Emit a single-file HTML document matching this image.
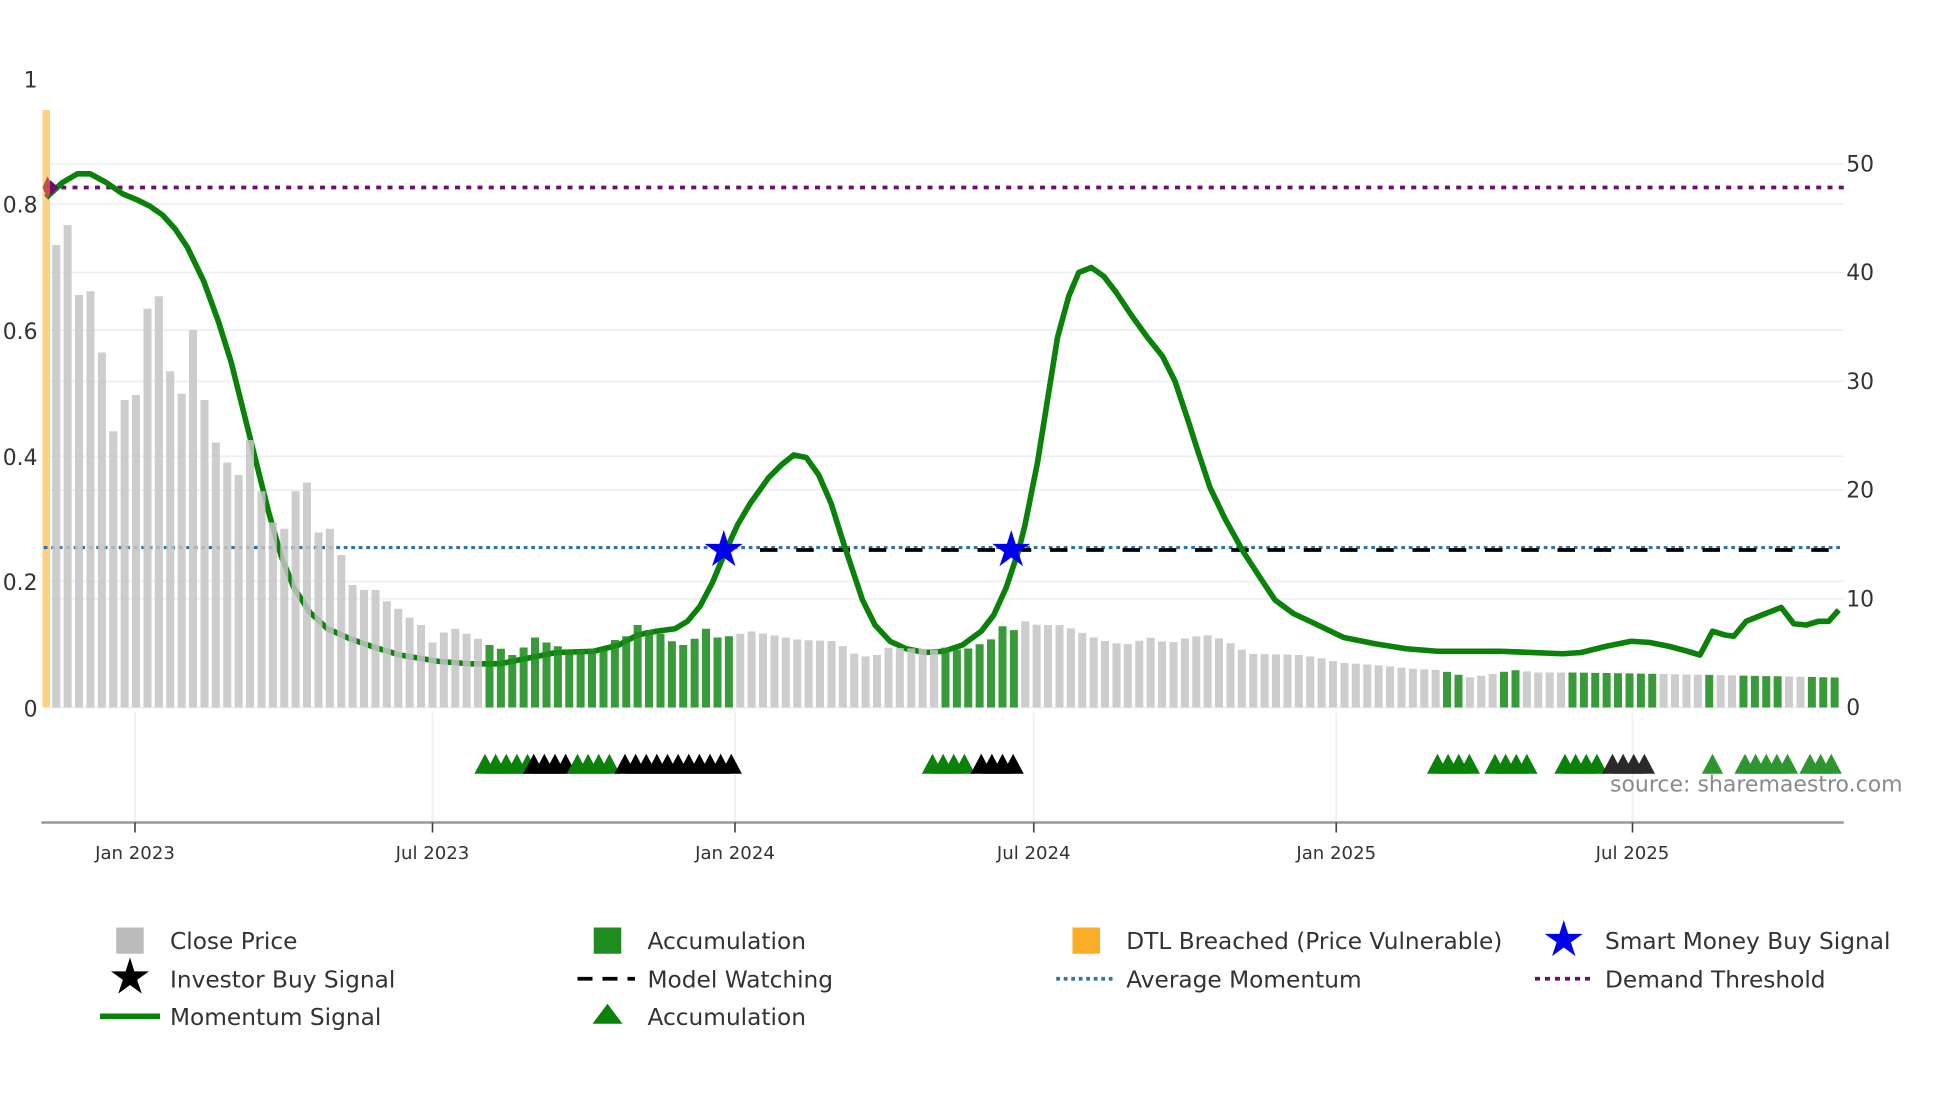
<!DOCTYPE html>
<html><head><meta charset="utf-8"><style>
html,body{margin:0;padding:0;background:#fff;}
svg{display:block;font-family:"DejaVu Sans","Liberation Sans",sans-serif;}
</style></head><body>
<svg id="s" width="1960" height="1102" viewBox="0 0 1568 881.6" xmlns="http://www.w3.org/2000/svg">
<rect width="1568" height="882" fill="#fff"/>
<g stroke="#eef1f4" stroke-width="1.5">
<line x1="40" y1="131" x2="1475" y2="131"/><line x1="40" y1="163" x2="1475" y2="163"/>
<line x1="40" y1="218" x2="1475" y2="218"/><line x1="40" y1="264" x2="1475" y2="264"/>
<line x1="40" y1="305" x2="1475" y2="305"/><line x1="40" y1="365" x2="1475" y2="365"/>
<line x1="40" y1="392" x2="1475" y2="392"/><line x1="40" y1="465" x2="1475" y2="465"/>
<line x1="40" y1="479" x2="1475" y2="479"/><line x1="40" y1="566" x2="1475" y2="566"/>
<line x1="108" y1="570" x2="108" y2="658"/><line x1="346" y1="570" x2="346" y2="658"/>
<line x1="588" y1="570" x2="588" y2="658"/><line x1="827" y1="570" x2="827" y2="658"/>
<line x1="1069" y1="570" x2="1069" y2="658"/><line x1="1306" y1="570" x2="1306" y2="658"/>
</g>
<rect x="34" y="88" width="6" height="478" fill="#fbd27f"/>
<line x1="40" y1="150" x2="1475" y2="150" stroke="#6a0f6e" stroke-width="3" stroke-dasharray="4,5"/>
<line x1="35" y1="438" x2="1475" y2="438" stroke="#2f73a8" stroke-width="2.5" stroke-dasharray="3,3"/>
<line x1="608" y1="440" x2="1470" y2="440" stroke="#000" stroke-width="3" stroke-dasharray="14,15"/>
<polyline fill="none" stroke="#0a820a" stroke-width="4.5" stroke-linejoin="round" points="37,158 50,146 62,139 72,139 85,146 98,155 110,160 120,165 130,172 140,183 150,198 163,225 175,258 185,290 195,330 205,370 215,410 225,445 235,470 248,490 262,503 280,511 300,518 320,524 350,529 375,531 400,531 420,527 445,522 475,521 495,516 510,508 525,505 540,503 550,497 560,485 570,466 580,442 590,420 600,403 615,382 625,372 635,364 645,366 655,380 665,403 675,435 690,480 700,500 712,513 725,519 740,522 755,521 770,516 785,505 795,492 805,470 815,440 820,420 830,370 838,320 846,270 855,237 863,218 873,214 883,221 893,234 905,252 918,270 930,285 940,305 950,335 958,360 968,390 980,415 995,442 1010,465 1020,480 1035,491 1050,498 1075,510 1100,515 1125,519 1150,521 1200,521 1250,523 1265,522 1285,517 1305,513 1320,514 1335,517 1350,521 1360,524 1370,505 1380,508 1387,509 1397,497 1412,491 1425,486 1435,499 1445,500 1455,497 1463,497 1471,488"/>
<g id="bars"></g>
<g id="tris"></g>
<polygon points="34,150 38,141 42,150 38,159" fill="#c0504d"/>
<polygon points="40,144 47,150 40,156" fill="#6a0f6e"/>
<g id="stars"></g>
<line x1="33" y1="658" x2="1475" y2="658" stroke="#999" stroke-width="2"/>
<g stroke="#444" stroke-width="1.3">
<line x1="108" y1="658" x2="108" y2="666"/><line x1="346" y1="658" x2="346" y2="666"/>
<line x1="588" y1="658" x2="588" y2="666"/><line x1="827" y1="658" x2="827" y2="666"/>
<line x1="1069" y1="658" x2="1069" y2="666"/><line x1="1306" y1="658" x2="1306" y2="666"/>
</g>
<g font-size="14.5" fill="#333" text-anchor="middle">
<text x="108" y="687">Jan 2023</text><text x="346" y="687">Jul 2023</text>
<text x="588" y="687">Jan 2024</text><text x="827" y="687">Jul 2024</text>
<text x="1069" y="687">Jan 2025</text><text x="1306" y="687">Jul 2025</text>
</g>
<g font-size="17.5" fill="#333" text-anchor="end">
<text x="30" y="70">1</text><text x="30" y="170">0.8</text><text x="30" y="271">0.6</text>
<text x="30" y="372">0.4</text><text x="30" y="472">0.2</text><text x="30" y="573">0</text>
</g>
<g font-size="17.5" fill="#333">
<text x="1477" y="137">50</text><text x="1477" y="224">40</text><text x="1477" y="311">30</text>
<text x="1477" y="398">20</text><text x="1477" y="485">10</text><text x="1477" y="572">0</text>
</g>
<text x="1288" y="633" font-size="17.6" fill="#8a8a8a">source: sharemaestro.com</text>
<g font-size="18.6" fill="#333">
<rect x="93" y="742" width="22" height="21" fill="#bbb"/><text x="136" y="759">Close Price</text>
<rect x="475" y="742" width="22" height="21" fill="#1e8c1e"/><text x="518" y="759">Accumulation</text>
<rect x="858" y="742" width="22" height="21" fill="#fbad27"/><text x="901" y="759">DTL Breached (Price Vulnerable)</text>
<text x="1284" y="759">Smart Money Buy Signal</text>
<text x="136" y="790">Investor Buy Signal</text>
<line x1="462" y1="783" x2="508" y2="783" stroke="#000" stroke-width="3" stroke-dasharray="12,8"/><text x="518" y="790">Model Watching</text>
<line x1="845" y1="783" x2="890" y2="783" stroke="#2f73a8" stroke-width="3" stroke-dasharray="3,3"/><text x="901" y="790">Average Momentum</text>
<line x1="1228" y1="783" x2="1273" y2="783" stroke="#6a0f6e" stroke-width="3" stroke-dasharray="4,4"/><text x="1284" y="790">Demand Threshold</text>
<line x1="80" y1="813" x2="128" y2="813" stroke="#0a820a" stroke-width="4.5"/><text x="136" y="820">Momentum Signal</text>
<polygon points="474,819 486,803 498,819" fill="#0a820a"/><text x="518" y="820">Accumulation</text>
</g>
<g id="lstars"></g>
</svg>
<script>
(function(){
var NS="http://www.w3.org/2000/svg";
function el(p,t,a){var e=document.createElementNS(NS,t);for(var k in a)e.setAttribute(k,a[k]);document.getElementById(p).appendChild(e);}
var early=[196,180,236,233,282,345,320,316,247,237,297,315,264,320,354,370,380,352,393,418,423,393,386,426,423,444,468,472,472,481,487,494,500,514,506,503,507,511,516,519,524,518,510,514,517,520,520,519,520,512,509,500,504,507,513,516,511,503,510,509,508,506,509,510];
var kp=[[588,508],[600,505],[640,512],[670,513],[680,522],[700,527],[705,518],[740,519],[750,520],[760,517],[770,522],[780,515],[790,516],[800,500],[810,505],[820,497],[830,500],[850,500],[870,508],[880,512],[900,516],[920,510],[935,515],[950,510],[965,508],[980,512],[990,518],[1000,523],[1040,524],[1060,527],[1070,530],[1100,532],[1130,535],[1150,536],[1160,538],[1175,542],[1190,540],[1210,536],[1230,538],[1260,538],[1320,539],[1470,542]];
function interp(x){for(var i=0;i<kp.length-1;i++){if(x>=kp[i][0]&&x<=kp[i+1][0]){var t=(x-kp[i][0])/(kp[i+1][0]-kp[i][0]);return kp[i][1]+t*(kp[i+1][1]-kp[i][1]);}}return 542;}
var gr=[[388,458],[464,585],[748,815],[1152,1172],[1200,1218],[1254,1322],[1364,1376],[1392,1430],[1447,1476]];
function isG(x){for(var i=0;i<gr.length;i++)if(x>=gr[i][0]&&x<=gr[i][1])return true;return false;}
var step=9.12;
for(var i=0;i<157;i++){var cx=45+i*step;if(cx>1475)break;var ty=(i<early.length&&cx<=588)?early[i]:interp(cx);
var g=isG(cx);
el("bars","rect",{x:(cx-3.2).toFixed(1),y:ty.toFixed(1),width:"6.4",height:(566-ty).toFixed(1),fill:g?"#1e8c1e":"#c4c4c4","fill-opacity":g?"0.88":"0.85"});}
var tg=[[388,422,"#0a820a"],[427,455,"#000"],[462,494,"#0a820a"],[500,585,"#000"],[746,778,"#0a820a"],[785,817,"#000"],[1150,1176,"#0a820a"],[1196,1222,"#0a820a"],[1252,1283,"#0a820a"],[1290,1322,"#2a2a2a"],[1370,1371,"#2e962e"],[1396,1430,"#2e962e"],[1448,1472,"#2e962e"]];
tg.forEach(function(q){for(var x=q[0];x<=q[1]+0.1;x+=8.5){el("tris","polygon",{points:(x-8.5)+",619 "+x+",603 "+(x+8.5)+",619",fill:q[2]});}});
function star(p,cx,cy,R,r,c){var pts=[];for(var k=0;k<10;k++){var a=-Math.PI/2+k*Math.PI/5;var rr=k%2?r:R;pts.push((cx+rr*Math.cos(a)).toFixed(1)+","+(cy+rr*Math.sin(a)).toFixed(1));}el(p,"polygon",{points:pts.join(" "),fill:c});}
star("stars",579,440,16,6,"#0000ee");star("stars",809,440,16,6,"#0000ee");
star("lstars",1251,752,16,6,"#0000ee");star("lstars",104,782,16,6,"#000");
})();
</script>
</body></html>
